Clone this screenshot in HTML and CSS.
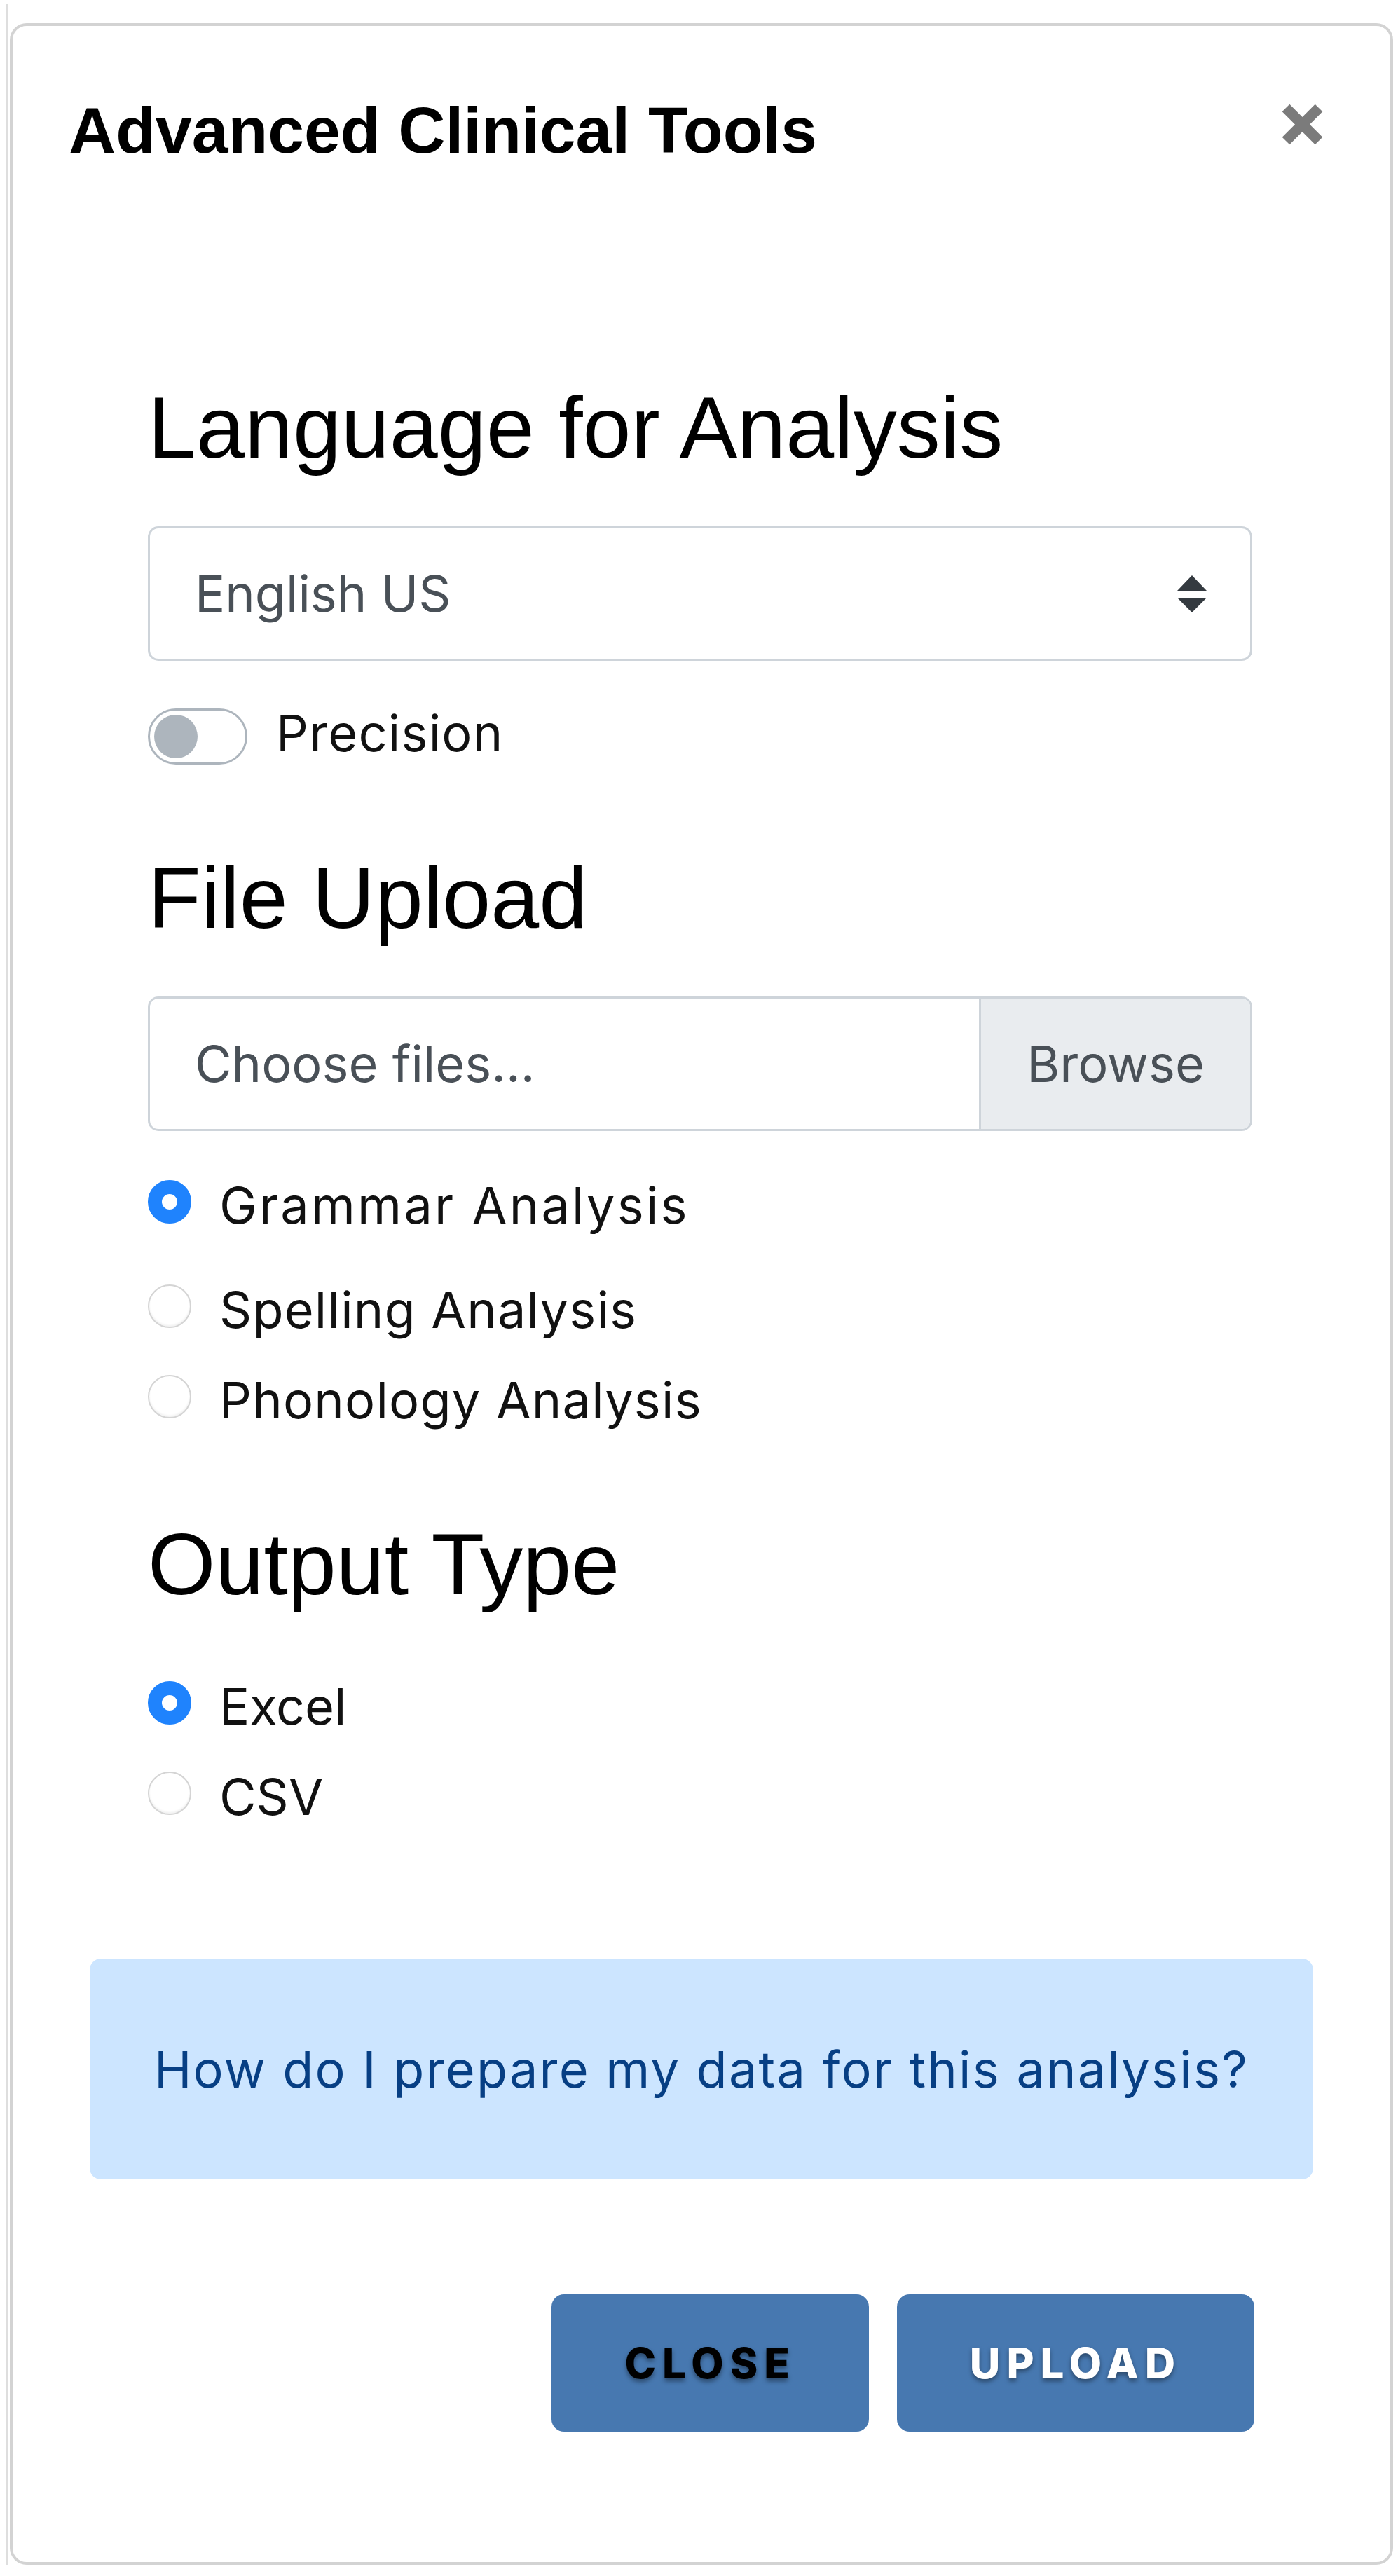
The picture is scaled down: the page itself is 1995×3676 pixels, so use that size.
FILE: index.html
```html
<!DOCTYPE html>
<html lang="en">
<head>
<meta charset="utf-8">
<title>Advanced Clinical Tools</title>
<link rel="stylesheet" href="styles.css">
</head>
<body>
<div class="frame">
  <div class="card">
    <header class="card-header">
      <h1 class="title">Advanced Clinical Tools</h1>
      <button class="close" type="button" aria-label="Close">
        <svg width="61" height="59" viewBox="0 0 61 59"><path d="M7 6 L54 53 M54 6 L7 53" stroke="#7b7b7b" stroke-width="15" fill="none"/></svg>
      </button>
    </header>
    <div class="card-body">
      <div class="form">
        <h2 class="section-title">Language for Analysis</h2>
        <div class="select">
          <span class="select-value">English US</span>
          <svg class="select-arrows" width="42" height="53" viewBox="0 0 42 53"><path d="M0 22 L21 0 L42 22 Z M0 32 L42 32 L21 53 Z" fill="#343a40"/></svg>
        </div>
        <div class="switch-row">
          <span class="switch"><span class="switch-knob"></span></span>
          <span class="label">Precision</span>
        </div>

        <h2 class="section-title">File Upload</h2>
        <div class="file-input">
          <span class="file-placeholder">Choose files...</span>
          <span class="file-browse">Browse</span>
        </div>
        <div class="radio-row radio-row-first">
          <span class="radio checked"></span>
          <span class="label label-wide">Grammar Analysis</span>
        </div>
        <div class="radio-row">
          <span class="radio"></span>
          <span class="label">Spelling Analysis</span>
        </div>
        <div class="radio-row">
          <span class="radio"></span>
          <span class="label">Phonology Analysis</span>
        </div>

        <h2 class="section-title section-title-output">Output Type</h2>
        <div class="radio-row">
          <span class="radio checked"></span>
          <span class="label label-tight">Excel</span>
        </div>
        <div class="radio-row">
          <span class="radio"></span>
          <span class="label label-tight">CSV</span>
        </div>
      </div>

      <div class="alert">How do I prepare my data for this analysis?</div>

      <footer class="card-footer">
        <button class="btn btn-close" type="button">Close</button>
        <button class="btn btn-upload" type="button">Upload</button>
      </footer>
    </div>
  </div>
</div>
</body>
</html>
```

FILE: styles.css
```css
* { box-sizing: border-box; }

html, body {
  margin: 0;
  padding: 0;
  background: #ffffff;
}

body {
  font-family: Inter, "Noto Sans", sans-serif;
  color: #111111;
}

.frame {
  margin: 5px 0 0 8px;
  padding: 28px 0 0 3px;
  border-left: 3px solid #dedede;
}

.card {
  width: 1974px;
  border: 4px solid #d3d3d3;
  border-radius: 24px;
  background: #ffffff;
}

.card-header {
  display: flex;
  justify-content: space-between;
  align-items: flex-start;
  padding: 93px 95px 0 80px;
}

.title {
  margin: 0;
  font-family: "Liberation Sans", Arial, sans-serif;
  font-weight: 700;
  font-size: 93px;
  line-height: 112px;
  color: #000000;
}

.close {
  margin-top: 18px;
  padding: 0;
  border: 0;
  background: transparent;
  display: block;
  line-height: 0;
}

.card-body {
  padding: 294px 110px 186px 110px;
}

.form {
  padding: 0 87px 0 83px;
}

.section-title {
  margin: 0 0 66px 0;
  font-family: "Liberation Sans", Arial, sans-serif;
  font-weight: 400;
  font-size: 124px;
  line-height: 149px;
  color: #000000;
}

.section-title-output {
  margin-bottom: 84px;
}

.switch-row + .section-title,
.radio-row + .section-title {
  margin-top: 116px;
}

.label {
  font-size: 72px;
  line-height: 88px;
  color: #111111;
  letter-spacing: 1.2px;
}

.label-wide {
  letter-spacing: 3.2px;
}

.label-tight {
  letter-spacing: 0;
}

.select {
  height: 192px;
  border: 3px solid #ced4da;
  border-radius: 15px;
  display: flex;
  align-items: center;
  justify-content: space-between;
  padding: 0 62px 0 64px;
}

.select-value {
  font-size: 72px;
  line-height: 88px;
  color: #495057;
}

.select-arrows {
  display: block;
}

.switch-row {
  display: flex;
  align-items: flex-start;
  gap: 41px;
  margin-top: 59px;
}

.switch {
  margin-top: 9px;
  width: 142px;
  height: 80px;
  border: 3px solid #adb5bd;
  border-radius: 40px;
  display: flex;
  align-items: center;
  padding-left: 6px;
}

.switch-knob {
  width: 62px;
  height: 62px;
  border-radius: 50%;
  background: #adb5bd;
}

.file-input {
  height: 192px;
  border: 3px solid #ced4da;
  border-radius: 15px;
  display: flex;
  overflow: hidden;
}

.file-placeholder {
  flex: 1;
  display: flex;
  align-items: center;
  padding-left: 64px;
  font-size: 72px;
  line-height: 88px;
  color: #495057;
}

.file-browse {
  display: flex;
  align-items: center;
  padding: 0 65px;
  border-left: 3px solid #ced4da;
  background: #e9ecef;
  font-size: 72px;
  line-height: 88px;
  color: #495057;
}

.radio-row {
  display: flex;
  align-items: flex-start;
  gap: 40px;
  margin-top: 41px;
}

.radio-row-first {
  margin-top: 62px;
  margin-bottom: 61px;
}

.section-title + .radio-row {
  margin-top: 0;
}

.radio {
  flex: none;
  margin-top: 8px;
  width: 62px;
  height: 62px;
  border-radius: 50%;
  border: 2px solid #d4d4d4;
  background: #ffffff;
  box-shadow: inset 0 -2px 3px rgba(0, 0, 0, 0.06);
}

.radio.checked {
  border: 20px solid #1f83fd;
  background: #ffffff;
  box-shadow: none;
}

.alert {
  margin-top: 187px;
  height: 315px;
  border-radius: 16px;
  background: #cce5ff;
  color: #073f84;
  font-size: 72px;
  line-height: 88px;
  letter-spacing: 2.2px;
  display: flex;
  align-items: center;
  justify-content: center;
}

.card-footer {
  display: flex;
  justify-content: flex-end;
  gap: 40px;
  margin-top: 164px;
  padding-right: 84px;
}

.btn {
  height: 196px;
  padding: 0 104px;
  border: 0;
  border-radius: 18px;
  background: #4778b0;
  font-family: Inter, "Noto Sans", sans-serif;
  font-weight: 800;
  font-size: 60px;
  letter-spacing: 9px;
  text-transform: uppercase;
  text-shadow: 0 4px 6px rgba(0, 0, 0, 0.4);
}

.btn-close {
  color: #000000;
}

.btn-upload {
  color: #ffffff;
}
```
